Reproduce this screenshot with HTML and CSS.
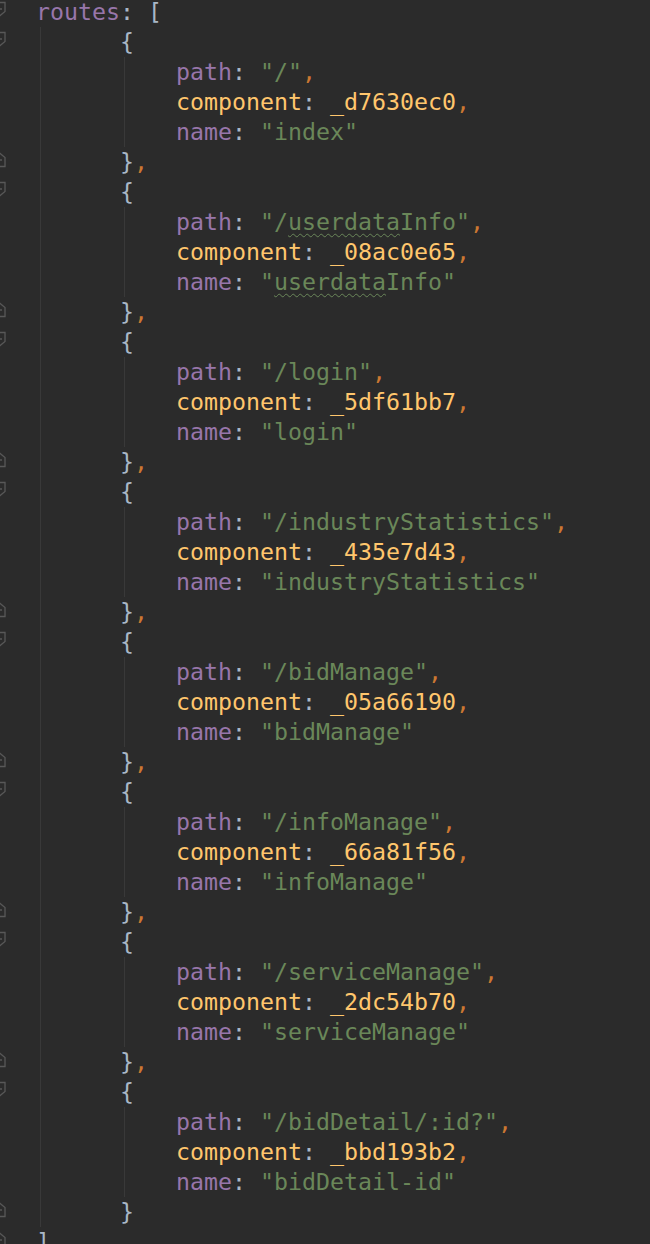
FILE: index.html
```html
<!DOCTYPE html>
<html>
<head>
<meta charset="utf-8">
<link rel="stylesheet" href="styles.css">
</head>
<body>
<div class="code">
  <div class="line"><span class="fold"><svg width="14" height="17" viewBox="0 0 14 17"><path d="M1 1.5 H13 V10.5 L7 15.5 L1 10.5 Z M4 8 H10" fill="none" stroke="#585858" stroke-width="1.3"/></svg></span><span class="k">routes</span><span class="p">: [</span></div>
  <div class="arr">
    <div class="obj">
      <div class="line"><span class="fold"><svg width="14" height="17" viewBox="0 0 14 17"><path d="M1 1.5 H13 V10.5 L7 15.5 L1 10.5 Z M4 8 H10" fill="none" stroke="#585858" stroke-width="1.3"/></svg></span><span class="p">{</span></div>
      <div class="body">
        <div class="line"><span class="k">path</span><span class="p">: </span><span class="s">"/"</span><span class="c">,</span></div>
        <div class="line"><span class="y">component</span><span class="p">: </span><span class="y">_d7630ec0</span><span class="c">,</span></div>
        <div class="line"><span class="k">name</span><span class="p">: </span><span class="s">"index"</span></div>
      </div>
      <div class="line"><span class="fold"><svg width="14" height="17" viewBox="0 0 14 17"><path d="M1 6.5 L7 1.5 L13 6.5 V15.5 H1 Z M4 9 H10" fill="none" stroke="#585858" stroke-width="1.3"/></svg></span><span class="p">}</span><span class="c">,</span></div>
    </div>
    <div class="obj">
      <div class="line"><span class="fold"><svg width="14" height="17" viewBox="0 0 14 17"><path d="M1 1.5 H13 V10.5 L7 15.5 L1 10.5 Z M4 8 H10" fill="none" stroke="#585858" stroke-width="1.3"/></svg></span><span class="p">{</span></div>
      <div class="body">
        <div class="line"><span class="k">path</span><span class="p">: </span><span class="s">"/<span class="typo">userdata</span>Info"</span><span class="c">,</span></div>
        <div class="line"><span class="y">component</span><span class="p">: </span><span class="y">_08ac0e65</span><span class="c">,</span></div>
        <div class="line"><span class="k">name</span><span class="p">: </span><span class="s">"<span class="typo">userdata</span>Info"</span></div>
      </div>
      <div class="line"><span class="fold"><svg width="14" height="17" viewBox="0 0 14 17"><path d="M1 6.5 L7 1.5 L13 6.5 V15.5 H1 Z M4 9 H10" fill="none" stroke="#585858" stroke-width="1.3"/></svg></span><span class="p">}</span><span class="c">,</span></div>
    </div>
    <div class="obj">
      <div class="line"><span class="fold"><svg width="14" height="17" viewBox="0 0 14 17"><path d="M1 1.5 H13 V10.5 L7 15.5 L1 10.5 Z M4 8 H10" fill="none" stroke="#585858" stroke-width="1.3"/></svg></span><span class="p">{</span></div>
      <div class="body">
        <div class="line"><span class="k">path</span><span class="p">: </span><span class="s">"/login"</span><span class="c">,</span></div>
        <div class="line"><span class="y">component</span><span class="p">: </span><span class="y">_5df61bb7</span><span class="c">,</span></div>
        <div class="line"><span class="k">name</span><span class="p">: </span><span class="s">"login"</span></div>
      </div>
      <div class="line"><span class="fold"><svg width="14" height="17" viewBox="0 0 14 17"><path d="M1 6.5 L7 1.5 L13 6.5 V15.5 H1 Z M4 9 H10" fill="none" stroke="#585858" stroke-width="1.3"/></svg></span><span class="p">}</span><span class="c">,</span></div>
    </div>
    <div class="obj">
      <div class="line"><span class="fold"><svg width="14" height="17" viewBox="0 0 14 17"><path d="M1 1.5 H13 V10.5 L7 15.5 L1 10.5 Z M4 8 H10" fill="none" stroke="#585858" stroke-width="1.3"/></svg></span><span class="p">{</span></div>
      <div class="body">
        <div class="line"><span class="k">path</span><span class="p">: </span><span class="s">"/industryStatistics"</span><span class="c">,</span></div>
        <div class="line"><span class="y">component</span><span class="p">: </span><span class="y">_435e7d43</span><span class="c">,</span></div>
        <div class="line"><span class="k">name</span><span class="p">: </span><span class="s">"industryStatistics"</span></div>
      </div>
      <div class="line"><span class="fold"><svg width="14" height="17" viewBox="0 0 14 17"><path d="M1 6.5 L7 1.5 L13 6.5 V15.5 H1 Z M4 9 H10" fill="none" stroke="#585858" stroke-width="1.3"/></svg></span><span class="p">}</span><span class="c">,</span></div>
    </div>
    <div class="obj">
      <div class="line"><span class="fold"><svg width="14" height="17" viewBox="0 0 14 17"><path d="M1 1.5 H13 V10.5 L7 15.5 L1 10.5 Z M4 8 H10" fill="none" stroke="#585858" stroke-width="1.3"/></svg></span><span class="p">{</span></div>
      <div class="body">
        <div class="line"><span class="k">path</span><span class="p">: </span><span class="s">"/bidManage"</span><span class="c">,</span></div>
        <div class="line"><span class="y">component</span><span class="p">: </span><span class="y">_05a66190</span><span class="c">,</span></div>
        <div class="line"><span class="k">name</span><span class="p">: </span><span class="s">"bidManage"</span></div>
      </div>
      <div class="line"><span class="fold"><svg width="14" height="17" viewBox="0 0 14 17"><path d="M1 6.5 L7 1.5 L13 6.5 V15.5 H1 Z M4 9 H10" fill="none" stroke="#585858" stroke-width="1.3"/></svg></span><span class="p">}</span><span class="c">,</span></div>
    </div>
    <div class="obj">
      <div class="line"><span class="fold"><svg width="14" height="17" viewBox="0 0 14 17"><path d="M1 1.5 H13 V10.5 L7 15.5 L1 10.5 Z M4 8 H10" fill="none" stroke="#585858" stroke-width="1.3"/></svg></span><span class="p">{</span></div>
      <div class="body">
        <div class="line"><span class="k">path</span><span class="p">: </span><span class="s">"/infoManage"</span><span class="c">,</span></div>
        <div class="line"><span class="y">component</span><span class="p">: </span><span class="y">_66a81f56</span><span class="c">,</span></div>
        <div class="line"><span class="k">name</span><span class="p">: </span><span class="s">"infoManage"</span></div>
      </div>
      <div class="line"><span class="fold"><svg width="14" height="17" viewBox="0 0 14 17"><path d="M1 6.5 L7 1.5 L13 6.5 V15.5 H1 Z M4 9 H10" fill="none" stroke="#585858" stroke-width="1.3"/></svg></span><span class="p">}</span><span class="c">,</span></div>
    </div>
    <div class="obj">
      <div class="line"><span class="fold"><svg width="14" height="17" viewBox="0 0 14 17"><path d="M1 1.5 H13 V10.5 L7 15.5 L1 10.5 Z M4 8 H10" fill="none" stroke="#585858" stroke-width="1.3"/></svg></span><span class="p">{</span></div>
      <div class="body">
        <div class="line"><span class="k">path</span><span class="p">: </span><span class="s">"/serviceManage"</span><span class="c">,</span></div>
        <div class="line"><span class="y">component</span><span class="p">: </span><span class="y">_2dc54b70</span><span class="c">,</span></div>
        <div class="line"><span class="k">name</span><span class="p">: </span><span class="s">"serviceManage"</span></div>
      </div>
      <div class="line"><span class="fold"><svg width="14" height="17" viewBox="0 0 14 17"><path d="M1 6.5 L7 1.5 L13 6.5 V15.5 H1 Z M4 9 H10" fill="none" stroke="#585858" stroke-width="1.3"/></svg></span><span class="p">}</span><span class="c">,</span></div>
    </div>
    <div class="obj">
      <div class="line"><span class="fold"><svg width="14" height="17" viewBox="0 0 14 17"><path d="M1 1.5 H13 V10.5 L7 15.5 L1 10.5 Z M4 8 H10" fill="none" stroke="#585858" stroke-width="1.3"/></svg></span><span class="p">{</span></div>
      <div class="body">
        <div class="line"><span class="k">path</span><span class="p">: </span><span class="s">"/bidDetail/:id?"</span><span class="c">,</span></div>
        <div class="line"><span class="y">component</span><span class="p">: </span><span class="y">_bbd193b2</span><span class="c">,</span></div>
        <div class="line"><span class="k">name</span><span class="p">: </span><span class="s">"bidDetail-id"</span></div>
      </div>
      <div class="line"><span class="fold"><svg width="14" height="17" viewBox="0 0 14 17"><path d="M1 6.5 L7 1.5 L13 6.5 V15.5 H1 Z M4 9 H10" fill="none" stroke="#585858" stroke-width="1.3"/></svg></span><span class="p">}</span></div>
    </div>
  </div>
  <div class="line"><span class="fold"><svg width="14" height="17" viewBox="0 0 14 17"><path d="M1 6.5 L7 1.5 L13 6.5 V15.5 H1 Z M4 9 H10" fill="none" stroke="#585858" stroke-width="1.3"/></svg></span><span class="p">]</span></div>
</div>
</body>
</html>
```

FILE: styles.css
```css
html, body {
  margin: 0;
  padding: 0;
  background: #2b2b2b;
  height: 1244px;
  overflow: hidden;
}

.code {
  position: relative;
  margin-top: -3px;
  padding-left: 36px;
  font-family: "DejaVu Sans Mono", "Liberation Mono", monospace;
  font-size: 23.25px;
  color: #a9b7c6;
}

.line {
  height: 30px;
  line-height: 30px;
  white-space: pre;
}

.fold {
  position: absolute;
  left: -8px;
  margin-top: 4px;
  height: 17px;
  line-height: 0;
}

.arr {
  margin-left: 4px;
  border-left: 1px solid #393939;
}

.obj {
  margin-left: 79px;
}

.body {
  margin-left: 4px;
  border-left: 1px solid #393939;
  padding-left: 51px;
}

.k { color: #9876aa; }
.y { color: #ffc66d; }
.s { color: #6a8759; }
.c { color: #cc7832; }
.p { color: #a9b7c6; }

.typo {
  text-decoration: underline wavy #6a8759;
  text-decoration-thickness: 1px;
  text-underline-offset: 3px;
}
```
